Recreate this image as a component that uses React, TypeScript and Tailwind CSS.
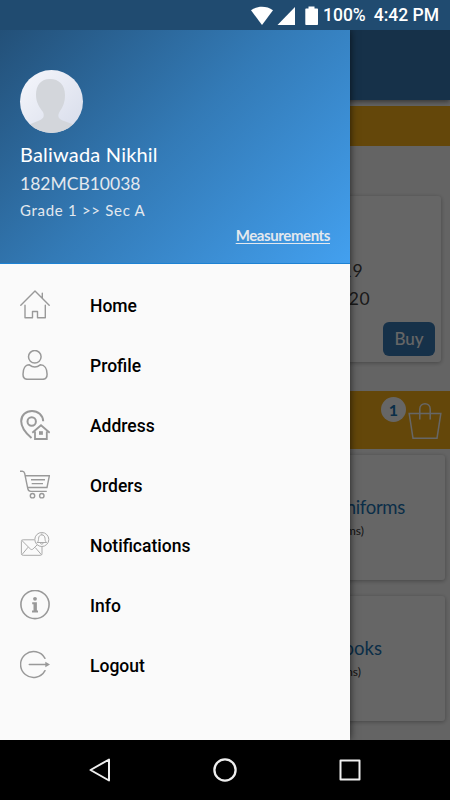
import React from 'react';

const HomeIcon = () => (
  <svg viewBox="0 0 30 30" className="w-[30px] h-[30px]" fill="none" stroke="#999" strokeWidth="1.4" strokeLinejoin="round" strokeLinecap="round">
    <path d="M.8 15.2 15 1l14.2 14.2M22.3 7.8V3.2M5 15.2v12.5h7.5v-6.2h5v6.2h7.8V15.2" />
  </svg>
);

const ProfileIcon = () => (
  <svg viewBox="0 0 30 30" className="w-[30px] h-[30px]" fill="none" stroke="#999" strokeWidth="1.5">
    <circle cx="14.8" cy="6.8" r="6.3" />
    <path d="M9.3 14.8c3.3 2.7 7.7 2.7 11 0 4.2 0 6.8 4 6.8 9.5 0 3.5-1.3 5-4.5 5H7.5c-3.2 0-4.5-1.5-4.5-5 0-5.5 2.3-9.5 6.3-9.5z" />
  </svg>
);

const AddressIcon = () => (
  <svg viewBox="0 0 30 30" className="w-[30px] h-[30px]" fill="none" stroke="#999" strokeWidth="2">
    <path d="M11.5 28.1C7.5 24.6 1.2 19 1.2 11.2 1.2 5 6 1 12 1s10.8 4 11.2 10.3" />
    <circle cx="11.7" cy="11.5" r="4.2" />
    <path d="M12.3 22.8 21 15.2l8.7 7.6M15 21.5V29h11.8v-7.5" strokeWidth="1.8" />
    <path d="M19 21.2h3.9v3.6H19z" fill="#999" stroke="none" />
  </svg>
);

const OrdersIcon = () => (
  <svg viewBox="0 0 30 30" className="w-[30px] h-[30px]" fill="none" stroke="#999" strokeWidth="1.4">
    <path d="M0 1.200h2.300c1.400 0 1.900.5 2.300 2l3.200 15.500c.4 2 1.200 2.700 3 2.700h16M5.300 5.700h24.100L27 17.500H7.700M11 9.800h14M11.700 13.600H23" />
    <circle cx="12.5" cy="25.7" r="2.2" />
    <circle cx="21.8" cy="25.7" r="2.2" />
  </svg>
);

const NotificationsIcon = () => (
  <svg viewBox="0 0 30 30" className="w-[30px] h-[30px]" fill="none" stroke="#aaa" strokeWidth="1">
    <path d="M14.5 9.8H3.2c-1.1 0-1.8.6-1.8 1.6v12.2c0 1.1.7 1.7 1.8 1.7h17.1c1.1 0 1.7-.6 1.7-1.7v-7.5M1.7 10.3l8.6 8.6c.9.9 1.9.9 2.8 0l4-4M1.8 24.8l6.3-7.6M21.5 24.8l-6.2-7.2" />
    <circle cx="21.8" cy="9.5" r="7" />
    <path d="M17 12.5h9.7c-1.7-1.1-1.5-2.5-1.7-4.3-.2-2-1.3-3.3-3.2-3.3s-3 1.3-3.2 3.3c-.2 1.8 0 3.2-1.6 4.3zM21.8 3.4v1.5M20.3 12.7c.2 2 2.8 2 3 0" />
  </svg>
);

const InfoIcon = () => (
  <svg viewBox="0 0 30 30" className="w-[30px] h-[30px]" fill="none" stroke="#999">
    <circle cx="15" cy="14.5" r="14.1" strokeWidth="1.6" />
    <circle cx="15" cy="8.8" r="1.9" fill="#999" stroke="none" />
    <path d="M12.2 12.3h4.7v8.3H18v2h-6v-2h1.5v-6.3h-1.3z" fill="#999" stroke="none" />
  </svg>
);

const LogoutIcon = () => (
  <svg viewBox="0 0 30 30" className="w-[30px] h-[30px]" fill="none" stroke="#999" strokeWidth="1.5" strokeLinecap="round">
    <path d="M25 8.3a13 13 0 1 0 0 12.4M9.3 14.5H26" />
    <path d="M25.3 11.7v5.6l4.7-2.8z" fill="#999" stroke="none" />
  </svg>
);

const menu = [
  { label: 'Home', icon: <HomeIcon /> },
  { label: 'Profile', icon: <ProfileIcon /> },
  { label: 'Address', icon: <AddressIcon /> },
  { label: 'Orders', icon: <OrdersIcon /> },
  { label: 'Notifications', icon: <NotificationsIcon /> },
  { label: 'Info', icon: <InfoIcon /> },
  { label: 'Logout', icon: <LogoutIcon /> },
];

const StatusBar = () => (
  <div className="h-[30px] shrink-0 bg-[#204b70] flex items-center justify-end pr-[11px] pt-px text-white font-['Roboto',sans-serif] font-medium text-[17.5px]">
    <svg viewBox="0 0 70 20" className="w-[70px] h-5 shrink-0" fill="#fff">
      <path d="M1 4.2C7.5-.4 16.5-.4 23 4.2L12 19z" />
      <path d="M45 1v18H27.5z" />
      <path d="M58.5.5h6v2H67c.6 0 1 .4 1 1V18c0 .6-.4 1-1 1H56.3c-.6 0-1-.4-1-1V3.5c0-.6.4-1 1-1h2.2z" />
    </svg>
    <span className="ml-[3px] w-[43px] whitespace-nowrap">100%</span>
    <span className="ml-[7px] w-[66px] text-right whitespace-nowrap">4:42 PM</span>
  </div>
);

// Store page that stays behind the open drawer
const StorePage = () => (
  <div className="h-full bg-[#fafafa] font-['Lato',sans-serif] flex flex-col">
    <div className="h-[70px] shrink-0 bg-[#377ab6] shadow-[0_2px_5px_rgba(0,0,0,0.45)] relative" />
    <div className="h-10 shrink-0 mt-[6px] bg-[#fab21b]" />
    <div className="h-[166px] shrink-0 mt-[50px] mx-[9px] rounded-[3px] bg-white shadow-[0_1px_4px_rgba(0,0,0,0.3)] flex flex-col items-end text-[17.5px] text-[#444]">
      <div className="mt-[61px] mr-[78px] h-7 leading-7 tracking-wide">19</div>
      <div className="mr-[71px] h-7 leading-7 tracking-wide">20</div>
      <div className="mt-[9px] mr-[6px] w-[52px] h-[34px] rounded-[6px] bg-[#377ab6] text-white text-[17px] font-medium flex items-center justify-center">Buy</div>
    </div>
    <div className="h-[58px] shrink-0 mt-[29px] bg-[#fab21b] flex justify-end pr-2">
      <div className="w-[25px] h-[25px] mt-[6px] rounded-full bg-white text-[#1b74b4] font-bold text-[16px] flex items-center justify-center">1</div>
      <svg viewBox="0 0 34 38" className="w-[34px] h-[38px] mt-[11px] ml-[2px]" fill="none" stroke="#fff" strokeWidth="1.5">
        <path d="M1.2 11.5h31.6L29 36.300H5zM11.8 17.5V7c0-7 10.400-7 10.400 0v10.500" />
      </svg>
    </div>
    <div className="h-[125px] shrink-0 mt-[6px] mx-[5px] rounded-[3px] bg-white shadow-[0_1px_4px_rgba(0,0,0,0.3)] flex flex-col items-end">
      <div className="mt-[40px] mr-[40px] text-[18.5px] tracking-[-0.3px] leading-6 text-[#1b74b4]">Uniforms</div>
      <div className="mt-[4px] mr-[81px] text-[12px] leading-4 text-[#333]">(3 items)</div>
    </div>
    <div className="h-[125px] shrink-0 mt-4 mx-[5px] rounded-[3px] bg-white shadow-[0_1px_4px_rgba(0,0,0,0.3)] flex flex-col items-end">
      <div className="mt-[40px] mr-[63px] text-[18.5px] leading-6 text-[#1b74b4]">Books</div>
      <div className="mt-[4px] mr-[84px] text-[12px] leading-4 text-[#333]">(2 items)</div>
    </div>
  </div>
);

const Drawer = () => (
  <div className="absolute left-0 top-0 w-[350px] h-full bg-[#fafafa] shadow-[0_0_8px_rgba(0,0,0,0.7)] flex flex-col">
    <div className="h-[234px] shrink-0 px-5 pt-10 bg-[linear-gradient(135deg,#235078_0%,#337ab6_48%,#43a0ef_100%)] border-b border-[#1d82d3] text-[#e3e8ee] font-['Lato',sans-serif] flex flex-col">
      <div className="w-[63px] h-[63px] shrink-0 rounded-full overflow-hidden bg-gradient-to-br from-[#f6f7fc] to-[#d7dcea]">
        <svg viewBox="0 0 63 63" className="w-full h-full" fill="#d3d6db">
          <path d="M30 9c-9 0-14 6-14 16 0 8 4 13 7 17 2 5 0 7-5 9l-10 4v8h47v-8l-11-4c-6-2-7-5-4-10 3-4 5-9 5-16C45 15 39 9 30 9z" />
        </svg>
      </div>
      <div className="mt-[9px] h-6 leading-6 text-[20px] tracking-[0.2px] text-white whitespace-nowrap">Baliwada Nikhil</div>
      <div className="mt-[6px] h-6 leading-6 text-[17.5px] whitespace-nowrap">182MCB10038</div>
      <div className="mt-[4px] h-5 leading-5 text-[15px] tracking-[0.7px] whitespace-nowrap">Grade 1 &gt;&gt; Sec A</div>
      <div className="mt-[5px] h-5 leading-5 text-[15px] tracking-[-0.4px] font-bold text-right underline underline-offset-2 decoration-1">Measurements</div>
    </div>
    <div className="pt-[11px]">
      {menu.map((item) => (
        <div key={item.label} className="h-[60px] pl-5 flex items-center">
          {item.icon}
          <span className="ml-10 pt-0.5 font-['Roboto',sans-serif] font-medium text-[17.5px] text-black">{item.label}</span>
        </div>
      ))}
    </div>
  </div>
);

const NavBar = () => (
  <div className="h-[60px] shrink-0 bg-black flex items-center justify-center gap-[101px]">
    <svg viewBox="0 0 24 24" className="w-6 h-6" fill="none" stroke="#eee" strokeWidth="2" strokeLinejoin="round">
      <path d="M21 1.5v21L2.5 12z" />
    </svg>
    <svg viewBox="0 0 24 24" className="w-6 h-6" fill="none" stroke="#eee" strokeWidth="2.3">
      <circle cx="12" cy="12" r="10.6" />
    </svg>
    <svg viewBox="0 0 24 24" className="w-6 h-6" fill="none" stroke="#eee" strokeWidth="2" strokeLinejoin="round">
      <path d="M2.5 2.5h19v19h-19z" />
    </svg>
  </div>
);

const App = () => {
  return (
    <div className="w-[450px] h-[800px] flex flex-col overflow-hidden">
      <StatusBar />
      <div className="h-[710px] shrink-0 relative overflow-hidden">
        <StorePage />
        <div className="absolute inset-0 bg-black/60" />
        <Drawer />
      </div>
      <NavBar />
    </div>
  );
};

export default App;
